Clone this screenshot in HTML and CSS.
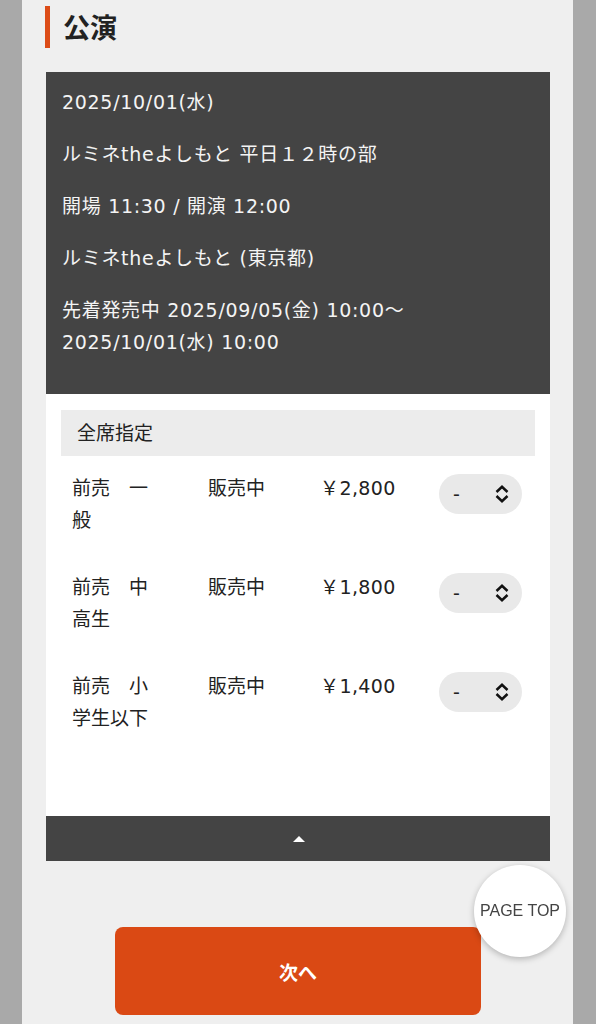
FILE: index.html
```html
<!DOCTYPE html>
<html lang="ja">
    <head>
        <meta charset="utf-8">
        <meta name="viewport" content="width=device-width, initial-scale=1">
        <title>公演</title>
        <link rel="stylesheet" href="styles.css">
    </head>
    <body>
        <div class="container">
            <h2 class="section-title">公演</h2>

            <!-- performance info -->
            <div class="perf-info">
                <p>2025/10/01(水)</p>
                <p>ルミネtheよしもと 平日１２時の部</p>
                <p>開場 11:30 / 開演 12:00</p>
                <p>ルミネtheよしもと (東京都)</p>
                <p>先着発売中 2025/09/05(金) 10:00～<br>2025/10/01(水) 10:00</p>
            </div>

            <!-- ticket list -->
            <div class="tickets">
                <div class="seat-type">全席指定</div>

                <div class="ticket-row">
                    <div class="ticket-name">前売　一般</div>
                    <div class="ticket-status">販売中</div>
                    <div class="ticket-price">￥2,800</div>
                    <div class="qty">
                        <span>-</span>
                        <svg width="16" height="18" viewBox="0 0 16 18"><path d="M2.5 7 L8 1.8 L13.5 7 M2.5 11 L8 16.2 L13.5 11" fill="none" stroke="#111" stroke-width="2.5"/></svg>
                    </div>
                </div>

                <div class="ticket-row">
                    <div class="ticket-name">前売　中高生</div>
                    <div class="ticket-status">販売中</div>
                    <div class="ticket-price">￥1,800</div>
                    <div class="qty">
                        <span>-</span>
                        <svg width="16" height="18" viewBox="0 0 16 18"><path d="M2.5 7 L8 1.8 L13.5 7 M2.5 11 L8 16.2 L13.5 11" fill="none" stroke="#111" stroke-width="2.5"/></svg>
                    </div>
                </div>

                <div class="ticket-row">
                    <div class="ticket-name">前売　小学生以下</div>
                    <div class="ticket-status">販売中</div>
                    <div class="ticket-price">￥1,400</div>
                    <div class="qty">
                        <span>-</span>
                        <svg width="16" height="18" viewBox="0 0 16 18"><path d="M2.5 7 L8 1.8 L13.5 7 M2.5 11 L8 16.2 L13.5 11" fill="none" stroke="#111" stroke-width="2.5"/></svg>
                    </div>
                </div>
            </div>

            <div class="collapse-bar"><span class="arrow-up"></span></div>

            <div class="actions">
                <button type="button" class="next-btn">次へ</button>
            </div>
        </div>

        <a class="page-top" href="#">PAGE TOP</a>
    </body>
</html>
```

FILE: styles.css
```css
html, body {
    margin: 0;
    padding: 0;
}

body {
    background-color: #a9a9a9;
    font-family: "DejaVu Sans", "Noto Sans CJK JP", sans-serif;
    color: #222;
}

.container {
    width: 551px;
    margin: 0 0 0 22px;
    background-color: #efefef;
    padding: 6px 23px 40px 24px;
    box-sizing: border-box;
    min-height: 1024px;
}

.section-title {
    margin: 0 0 24px -1px;
    padding-left: 13px;
    border-left: 5px solid #dc4c17;
    font-family: "Noto Sans CJK JP", sans-serif;
    font-size: 27px;
    font-weight: bold;
    line-height: 42px;
    color: #222;
}

.perf-info {
    background-color: #444;
    color: #f4f4f4;
    padding: 14px 16px 16px;
    font-size: 19px;
    line-height: 32px;
    letter-spacing: 0.7px;
}

.perf-info p {
    margin: 0 0 20px;
}

.tickets {
    background-color: #fff;
    padding: 16px 15px 63px;
}

.seat-type {
    background-color: #ececec;
    padding: 7px 16px;
    font-size: 19px;
    line-height: 32px;
}

.ticket-row {
    display: grid;
    grid-template-columns: 136px 112px 1fr 83px;
    align-items: start;
    padding: 16px 13px 19px 11px;
    font-size: 19px;
    line-height: 32px;
}

.ticket-price {
    letter-spacing: 0.4px;
}

.ticket-name {
    padding-right: 56px;
}

.qty {
    display: flex;
    justify-content: space-between;
    align-items: center;
    height: 40px;
    margin-top: 2px;
    padding: 0 12px 0 14px;
    border-radius: 20px;
    background-color: #e9e9e9;
}

.qty svg {
    display: block;
}

.collapse-bar {
    display: flex;
    justify-content: center;
    align-items: center;
    height: 45px;
    background-color: #444;
}

.arrow-up {
    width: 0;
    height: 0;
    border-left: 6px solid transparent;
    border-right: 6px solid transparent;
    border-bottom: 6px solid #fff;
    margin-left: 2px;
}

.actions {
    display: flex;
    justify-content: center;
    padding-top: 66px;
}

.next-btn {
    width: 366px;
    height: 88px;
    border: none;
    border-radius: 8px;
    background-color: #da4914;
    color: #fff;
    font-family: "Noto Sans CJK JP", sans-serif;
    font-size: 19px;
    font-weight: bold;
    cursor: pointer;
}

.page-top {
    position: fixed;
    left: 474px;
    top: 865px;
    width: 92px;
    height: 92px;
    border-radius: 50%;
    background-color: #fff;
    box-shadow: 0 2px 6px rgba(0, 0, 0, 0.25);
    display: flex;
    justify-content: center;
    align-items: center;
    font-family: "Liberation Sans", Arial, sans-serif;
    font-size: 16px;
    color: #444;
    text-decoration: none;
}
```
